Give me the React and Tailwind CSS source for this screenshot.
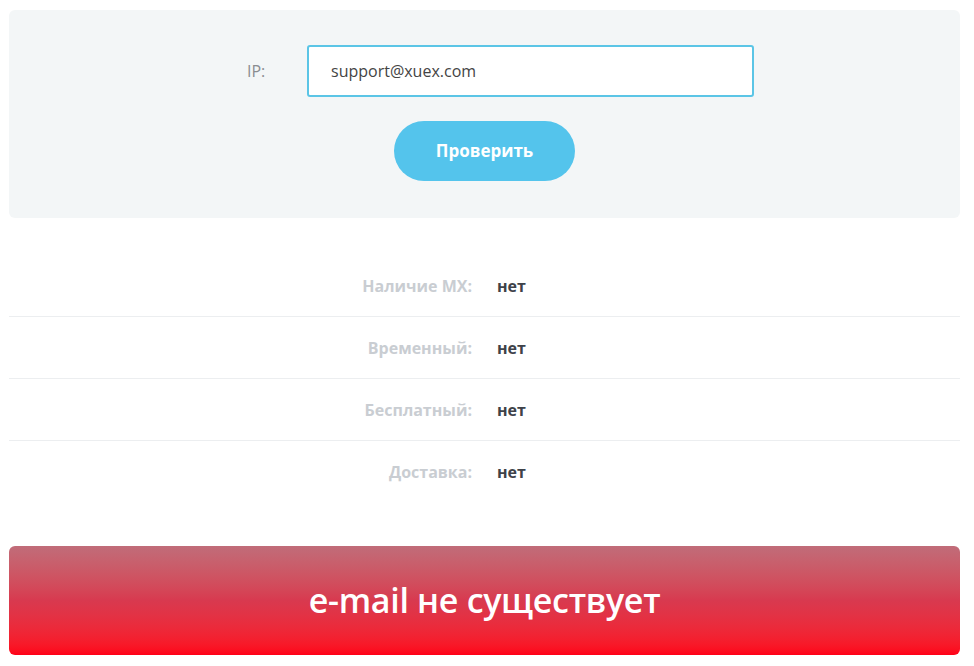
const rows = [
  ['Наличие MX:', 'нет'],
  ['Временный:', 'нет'],
  ['Бесплатный:', 'нет'],
  ['Доставка:', 'нет'],
];

export default function App() {
  return (
    <div
      className="w-[974px] h-[666px] bg-white pl-[9px] pr-[14px] pt-[10px]"
      style={{ fontFamily: '"Open Sans", "Noto Sans", sans-serif' }}
    >
      {/* форма */}
      <div className="bg-[#f3f6f7] rounded-md h-[208px] pt-[35px] flex flex-col items-center">
        <div className="flex items-center pl-[32px]">
          <span className="text-[16px] text-[#8a8d91] font-medium w-[21px]">IP:</span>
          <div className="ml-[39px] w-[447px] h-[52px] bg-white border-2 border-[#5bc5e6] rounded-[3px] flex items-center pl-[22px] text-[16px] text-[#444]">
            support@xuex.com
          </div>
        </div>
        <button className="mt-[24px] w-[181px] h-[60px] rounded-full bg-[#54c4ec] text-white text-[17px] font-bold">
          Проверить
        </button>
      </div>

      {/* результаты */}
      <div className="mt-[37px]">
        {rows.map(([label, value], i) => (
          <div
            key={label}
            className={`grid grid-cols-2 gap-[25px] h-[62px] items-center ${i < rows.length - 1 ? 'border-b border-[#eceef0]' : ''}`}
          >
            <span className="text-right text-[16px] font-bold text-[#c9cdd2]">{label}</span>
            <span className="text-[16px] font-bold text-[#3e4249]">{value}</span>
          </div>
        ))}
      </div>

      {/* итог */}
      <div className="mt-[43px] h-[109px] rounded-md bg-gradient-to-b from-[#c06c79] via-[#d8394f] to-[#ff0017] flex items-center justify-center">
        <span className="text-white text-[34px] font-semibold tracking-[-0.3px]">e-mail не существует</span>
      </div>
    </div>
  );
}
